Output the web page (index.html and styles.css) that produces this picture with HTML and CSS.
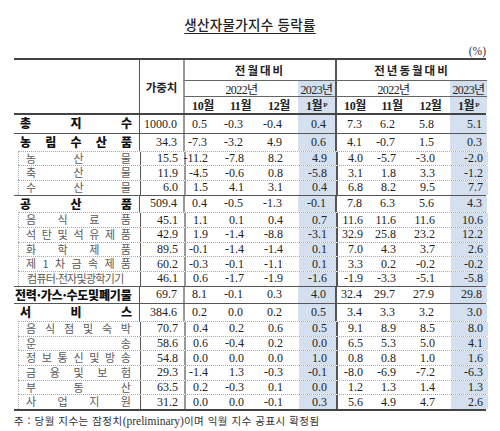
FILE: index.html
```html
<!DOCTYPE html>
<html lang="ko">
<head>
  <meta charset="UTF-8">
  <title>생산자물가지수 등락률</title>
  <link rel="stylesheet" href="styles.css">
</head>
<body>
  <h1 class="title">생산자물가지수 등락률</h1>
  <div class="unit">(%)</div>

  <div class="tbl">
    <div class="head">
      <div class="h-blank"></div>
      <div class="h-weight">가중치</div>
      <div class="h-group g1">전월대비</div>
      <div class="h-group g2">전년동월대비</div>
      <div class="h-year y1">2022년</div>
      <div class="h-year y1n blue">2023년</div>
      <div class="h-year y2">2022년</div>
      <div class="h-year y2n blue">2023년</div>
      <div class="h-mon m1 first">10월</div>
      <div class="h-mon">11월</div>
      <div class="h-mon">12월</div>
      <div class="h-mon blue">1월<sup>P</sup></div>
      <div class="h-mon second">10월</div>
      <div class="h-mon">11월</div>
      <div class="h-mon">12월</div>
      <div class="h-mon blue">1월<sup>P</sup></div>
    </div>

    <div class="row major top"><div class="lbl">총 지 수</div><div>1000.0</div><div>0.5</div><div>-0.3</div><div>-0.4</div><div>0.4</div><div>7.3</div><div>6.2</div><div>5.8</div><div>5.1</div></div>
    <div class="row major"><div class="lbl">농 림 수 산 품</div><div>34.3</div><div>-7.3</div><div>-3.2</div><div>4.9</div><div>0.6</div><div>4.1</div><div>-0.7</div><div>1.5</div><div>0.3</div></div>
    <div class="row sub"><div class="lbl">농 산 물</div><div>15.5</div><div>-11.2</div><div>-7.8</div><div>8.2</div><div>4.9</div><div>4.0</div><div>-5.7</div><div>-3.0</div><div>-2.0</div></div>
    <div class="row sub"><div class="lbl">축 산 물</div><div>11.9</div><div>-4.5</div><div>-0.6</div><div>0.8</div><div>-5.8</div><div>3.1</div><div>1.8</div><div>3.3</div><div>-1.2</div></div>
    <div class="row sub"><div class="lbl">수 산 물</div><div>6.0</div><div>1.5</div><div>4.1</div><div>3.1</div><div>0.4</div><div>6.8</div><div>8.2</div><div>9.5</div><div>7.7</div></div>
    <div class="row major"><div class="lbl">공 산 품</div><div>509.4</div><div>0.4</div><div>-0.5</div><div>-1.3</div><div>-0.1</div><div>7.8</div><div>6.3</div><div>5.6</div><div>4.3</div></div>
    <div class="row sub"><div class="lbl">음 식 료 품</div><div>45.1</div><div>1.1</div><div>0.1</div><div>0.4</div><div>0.7</div><div>11.6</div><div>11.6</div><div>11.6</div><div>10.6</div></div>
    <div class="row sub"><div class="lbl">석 탄 및 석 유 제 품</div><div>42.9</div><div>1.9</div><div>-1.4</div><div>-8.8</div><div>-3.1</div><div>32.9</div><div>25.8</div><div>23.2</div><div>12.2</div></div>
    <div class="row sub"><div class="lbl">화 학 제 품</div><div>89.5</div><div>-0.1</div><div>-1.4</div><div>-1.4</div><div>0.1</div><div>7.0</div><div>4.3</div><div>3.7</div><div>2.6</div></div>
    <div class="row sub"><div class="lbl">제 1 차 금 속 제 품</div><div>60.2</div><div>-0.3</div><div>-0.1</div><div>-1.1</div><div>0.1</div><div>3.3</div><div>0.2</div><div>-0.2</div><div>-0.2</div></div>
    <div class="row sub"><div class="lbl tight">컴퓨터·전자및광학기기</div><div>46.1</div><div>0.6</div><div>-1.7</div><div>-1.9</div><div>-1.6</div><div>-1.9</div><div>-3.3</div><div>-5.1</div><div>-5.8</div></div>
    <div class="row major"><div class="lbl tight">전력·가스·수도및폐기물</div><div>69.7</div><div>8.1</div><div>-0.1</div><div>0.3</div><div>4.0</div><div>32.4</div><div>29.7</div><div>27.9</div><div>29.8</div></div>
    <div class="row major"><div class="lbl">서 비 스</div><div>384.6</div><div>0.2</div><div>0.0</div><div>0.2</div><div>0.5</div><div>3.4</div><div>3.3</div><div>3.2</div><div>3.0</div></div>
    <div class="row sub"><div class="lbl">음 식 점 및 숙 박</div><div>70.7</div><div>0.4</div><div>0.2</div><div>0.6</div><div>0.5</div><div>9.1</div><div>8.9</div><div>8.5</div><div>8.0</div></div>
    <div class="row sub"><div class="lbl">운 송</div><div>58.6</div><div>0.6</div><div>-0.4</div><div>0.2</div><div>0.0</div><div>6.5</div><div>5.3</div><div>5.0</div><div>4.1</div></div>
    <div class="row sub"><div class="lbl">정 보 통 신 및 방 송</div><div>54.8</div><div>0.0</div><div>0.0</div><div>0.0</div><div>1.0</div><div>0.8</div><div>0.8</div><div>1.0</div><div>1.6</div></div>
    <div class="row sub"><div class="lbl">금 융 및 보 험</div><div>29.3</div><div>-1.4</div><div>1.3</div><div>-0.3</div><div>-0.1</div><div>-8.0</div><div>-6.9</div><div>-7.2</div><div>-6.3</div></div>
    <div class="row sub"><div class="lbl">부 동 산</div><div>63.5</div><div>0.2</div><div>-0.3</div><div>0.1</div><div>0.0</div><div>1.2</div><div>1.3</div><div>1.4</div><div>1.3</div></div>
    <div class="row sub last"><div class="lbl">사 업 지 원</div><div>31.2</div><div>0.0</div><div>0.0</div><div>-0.1</div><div>0.3</div><div>5.6</div><div>4.9</div><div>4.7</div><div>2.6</div></div>
  </div>

  <p class="note">주 : 당월 지수는 잠정치<span class="latin">(preliminary)</span>이며 익월 지수 공표시 확정됨</p>
</body>
</html>
```

FILE: styles.css
```css
/* Base */
body {
  margin: 0;
  padding: 0 14px;
  width: 472px;
  background: #fff;
  color: #222;
  font-family: 'Liberation Serif', 'Noto Sans CJK KR', serif;
}

.title {
  margin: 15px 0 0;
  font-family: 'Noto Sans CJK KR', sans-serif;
  font-size: 13.5px;
  font-weight: 500;
  line-height: 18px;
  text-align: center;
  text-decoration: underline;
  text-underline-offset: 3px;
  letter-spacing: 0.3px;
}

.unit {
  margin-top: 11px;
  font-size: 11.5px;
  line-height: 14px;
  text-align: right;
  color: #333;
}

/* Table */
.tbl {
  border-top: 2px solid #444;
  border-bottom: 2px solid #444;
}

.head,
.row {
  display: grid;
  grid-template-columns: 125px 44px 38px 39px 38px 37px 38px 38px 39px 37px;
}

.head {
  grid-template-rows: 21px 16px 16px;
  border-bottom: 2px solid #444;
  font-family: 'Liberation Serif', 'Noto Sans CJK KR', serif;
  font-weight: 700;
  font-size: 12px;
}

.head > div {
  display: flex;
  align-items: center;
  justify-content: center;
  box-sizing: border-box;
}

.h-blank { grid-row: 1 / 4; grid-column: 1; }

.h-weight {
  grid-row: 1 / 4;
  grid-column: 2;
  border-left: 1px solid #555;
  font-family: 'Noto Sans CJK KR', sans-serif;
  font-size: 11.5px;
  color: #222;
}

.h-group {
  grid-row: 1;
  border-bottom: 1px solid #666;
  font-family: 'Noto Sans CJK KR', sans-serif;
  font-size: 11.5px;
  letter-spacing: 2px;
  color: #222;
}
.g1 { grid-column: 3 / 7; border-left: 2px solid #999; }
.g2 { grid-column: 7 / 11; border-left: 2px solid #555; }

.h-year {
  grid-row: 2;
  border-bottom: 1px solid #666;
  font-weight: 400;
  font-size: 12px;
  letter-spacing: -0.6px;
}
.y1 { grid-column: 3 / 6; border-left: 2px solid #999; }
.y1n { grid-column: 6; }
.y2 { grid-column: 7 / 10; border-left: 2px solid #555; }
.y2n { grid-column: 10; }

.h-mon {
  grid-row: 3;
  font-size: 12px;
  letter-spacing: -0.4px;
}
.h-mon.first { grid-column: 3; border-left: 2px solid #999; }
.h-mon.second { grid-column: 7; border-left: 2px solid #555; }
.h-mon sup {
  font-size: 7px;
  vertical-align: 4px;
  margin-left: 1px;
}

.blue { background: #d4e0ef; }

/* Body rows */
.row { box-sizing: border-box; }

.row > div {
  box-sizing: border-box;
  font-size: 12px;
  line-height: 13px;
  text-align: right;
  display: flex;
  align-items: center;
  justify-content: flex-end;
}

.row > div:nth-child(2) { border-left: 1px solid #555; padding-right: 6px; }
.row > div:nth-child(3) { border-left: 2px solid #999; padding-right: 14px; }
.row > div:nth-child(4) { padding-right: 17px; }
.row > div:nth-child(5) { padding-right: 16px; }
.row > div:nth-child(6) { padding-right: 9px; background: #d4e0ef; }
.row > div:nth-child(7) { border-left: 2px solid #555; padding-right: 11px; }
.row > div:nth-child(8) { padding-right: 16px; }
.row > div:nth-child(9) { padding-right: 16px; }
.row > div:nth-child(10) { padding-right: 5px; background: #d4e0ef; }

.row > .lbl {
  display: block;
  font-family: 'Noto Sans CJK KR', sans-serif;
  text-align: justify;
  text-align-last: justify;
  white-space: nowrap;
}

.major {
  height: 17.6px;
  border-top: 1px solid #555;
}
.major.top { border-top: none; height: 18px; }
.major > .lbl {
  padding: 0 7px 0 6px;
  font-size: 12px;
  font-weight: 900;
  color: #111;
  line-height: 16.6px;
}

.sub {
  height: 14.7px;
  margin-left: 4px;
  grid-template-columns: 121px 44px 38px 39px 38px 37px 38px 38px 39px 37px;
  border-top: 1px dotted #aaa;
  border-left: 1px dotted #aaa;
}
.sub > .lbl {
  padding: 0 9px 0 7px;
  font-size: 11px;
  font-weight: 400;
  color: #5a5a5a;
  line-height: 13.7px;
}

.row > .lbl.tight {
  text-align: left;
  text-align-last: left;
}
.major > .lbl.tight { padding: 0 0 0 1px; font-size: 12px; letter-spacing: -0.2px; }
.sub > .lbl.tight { padding-left: 8px; font-size: 11px; letter-spacing: -0.7px; }

/* Footnote */
.note {
  margin: 3px 0 0;
  font-family: 'Noto Sans CJK KR', sans-serif;
  font-size: 10.5px;
  line-height: 14px;
  letter-spacing: 0.5px;
  color: #333;
}
.note .latin {
  font-family: 'Liberation Serif', serif;
  font-size: 11.5px;
  letter-spacing: 0;
}
```
